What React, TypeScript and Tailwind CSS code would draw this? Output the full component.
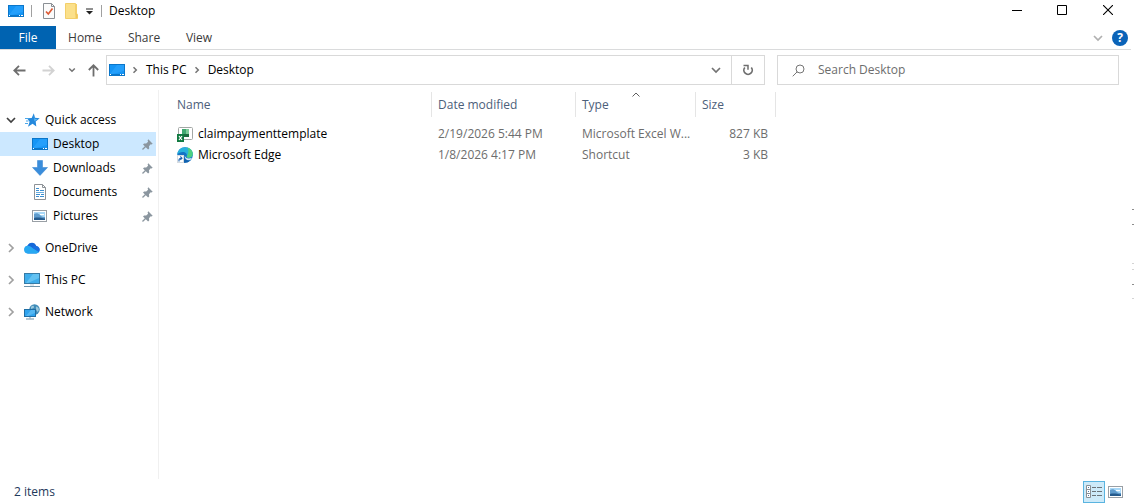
import type { ReactNode } from 'react'

const COLUMNS = [
  { label: 'Name', className: 'w-[273px] pl-[18px]' },
  { label: 'Date modified', className: 'w-[144px] pl-[6px]' },
  { label: 'Type', className: 'w-[120px] pl-[6px]', sorted: true },
  { label: 'Size', className: 'w-[80px] pl-[6px]' },
]

function DesktopIcon() {
  return (
    <svg width="16" height="16" viewBox="0 0 16 16" className="shrink-0" aria-hidden="true">
      <rect x="0" y="2" width="16" height="12" fill="#0b76c9" />
      <rect x="1" y="3" width="14" height="9" fill="#1595f5" />
      <path d="M8 3h7v6L4 12h-3z" fill="#2ea6ff" opacity=".6" />
      <path d="M1 12.5h1M11 12.5h1M13 12.5h2" stroke="#fff" />
    </svg>
  )
}

function CheckDocIcon() {
  return (
    <svg width="12" height="16" viewBox="0 0 12 16" aria-hidden="true">
      <path d="M.5.5h8l3 3v12H.5z" fill="#fbfbfb" stroke="#8a8f94" />
      <path d="M8.5.5v3h3" fill="none" stroke="#8a8f94" />
      <path d="M3 8.5l2.3 2.5L9.5 5.5" fill="none" stroke="#dc5a35" strokeWidth="1.7" />
    </svg>
  )
}

function FolderIcon() {
  return (
    <svg width="14" height="16" viewBox="0 0 14 16" aria-hidden="true">
      <path d="M.5.5h10v11h2v4H.5z" fill="#fbe08a" stroke="#f3cf6a" />
      <path d="M10.5 10.5h1.8V15h-1.8z" fill="#f0c75a" />
      <path d="M11.5 1v10" stroke="#f3cf6a" />
    </svg>
  )
}

function StarIcon() {
  return (
    <svg width="16" height="16" viewBox="0 0 16 16" className="shrink-0" aria-hidden="true">
      <path d="M9.8 1.2l1.2 4.6 4.7.4-4 3.2.6 5.1-3.7-2.8L4 14.7l1.6-5L3 6.300l4.700-.3z" fill="#2488dc" />
      <path d="M9.5 3l1 3.700 3 .5-3 2z" fill="#5db9f5" />
      <path d="M1 6.500h3.500M2 9h2.500M1 11.500h3" stroke="#4ba7ea" />
    </svg>
  )
}

function DownloadIcon() {
  return (
    <svg width="16" height="16" viewBox="0 0 16 16" className="shrink-0" aria-hidden="true">
      <path d="M5.5.5h5v7h5L8 15.5.5 7.500h5z" fill="#3a8ddb" stroke="#2e7fce" strokeWidth=".5" />
    </svg>
  )
}

function DocumentIcon() {
  return (
    <svg width="16" height="16" viewBox="0 0 16 16" className="shrink-0" aria-hidden="true">
      <path d="M2.5.5h8l3 3v12h-11z" fill="#fff" stroke="#8d9297" />
      <path d="M10.5.5v3h3" fill="none" stroke="#8d9297" />
      <path d="M4 4.500h3M4 6.500h3M8 6.500h4M4 10.500h4M9 10.500h3M4 12.500h3M8 12.500h4" stroke="#3d8fd0" />
      <path d="M4 8.500h8" stroke="#6baee0" />
    </svg>
  )
}

function PictureIcon() {
  return (
    <svg width="16" height="16" viewBox="0 0 16 16" className="shrink-0" aria-hidden="true">
      <rect x=".5" y="2.5" width="14" height="11" fill="#fff" stroke="#999fa5" />
      <rect x="2" y="4" width="11" height="8" fill="#a9d8f7" />
      <path d="M2 6c2-1 4-1 6 1s3 2 5 2v3H2z" fill="#5f9bcc" />
      <path d="M2 10c4-1 7 0 11 .5V12H2z" fill="#255a8c" />
      <path d="M8 6.500h4" stroke="#fff" />
    </svg>
  )
}

function CloudIcon() {
  return (
    <svg width="16" height="16" viewBox="0 0 16 16" className="shrink-0" aria-hidden="true">
      <path d="M4 13.500a4 4 0 01-.5-7.800A5 5 0 0112.300 6 3.800 3.800 0 0112.200 13.500z" fill="#1478e0" />
      <path d="M3.500 5.700A5 5 0 018 2.700c2 0 3.500 1.200 4.300 3.300L6 12z" fill="#1668d8" />
      <path d="M4 13.500a3.900 3.900 0 010-7.800c2 0 3 1.300 5 2.500l6 3.800a3.500 3.500 0 01-2.800 1.500z" fill="#27a8f2" />
      <path d="M12.300 6A3.800 3.800 0 0115 12L8 7.600C9.500 6.300 11 5.900 12.300 6z" fill="#1a6fe0" />
    </svg>
  )
}

function ComputerIcon() {
  return (
    <svg width="16" height="16" viewBox="0 0 16 16" className="shrink-0" aria-hidden="true">
      <rect x=".5" y="1.5" width="15" height="10" fill="#3fadeb" stroke="#367ba6" />
      <path d="M9 2h6v4L4 11H2z" fill="#7bd0f6" opacity=".6" />
      <path d="M6 12h4v2H6z" fill="#dbe5eb" />
      <path d="M0 14.500h16" stroke="#6f93a9" />
    </svg>
  )
}

function NetworkIcon() {
  return (
    <svg width="16" height="16" viewBox="0 0 16 16" className="shrink-0" aria-hidden="true">
      <circle cx="10.5" cy="5.5" r="5.2" fill="#3f8bb8" />
      <path d="M7 3c1.500-2 3-1 3 0S8.500 4.500 7 5zM12 2.500c1.500 0 2.300 1 2.700 2 .3 1.500 0 2.500-1 3.500C12.500 7 11.500 4.500 12 2.500z" fill="#9cc8dc" />
      <rect x=".5" y="5.5" width="11" height="7" fill="#2fa3ee" stroke="#1f6da3" />
      <path d="M7 6h4v3l-7 3H2z" fill="#6cc4f7" opacity=".6" />
      <path d="M5 13h2v1.500H5z" fill="#c0ced8" />
      <path d="M2 15h8" stroke="#6f93a9" />
    </svg>
  )
}

function ExcelIcon() {
  return (
    <svg width="16" height="16" viewBox="0 0 16 16" className="shrink-0" aria-hidden="true">
      <rect x="1.5" y="1.5" width="14" height="12" rx="1" fill="#fff" stroke="#a3a7a5" />
      <rect x="5" y="3" width="4" height="5" fill="#3fa870" />
      <rect x="9" y="3" width="3" height="5" fill="#7dcb98" />
      <rect x="5" y="8" width="7" height="3" fill="#1c6b3e" />
      <rect x="0" y="8" width="7" height="8" fill="#117a41" />
      <path d="M2 10l3 4M5 10l-3 4" stroke="#fff" strokeWidth="1.2" />
    </svg>
  )
}

function EdgeIcon() {
  return (
    <svg width="16" height="16" viewBox="0 0 16 16" className="shrink-0" aria-hidden="true">
      <circle cx="8" cy="8" r="7.8" fill="#1473c4" />
      <path d="M.3 7.500C.8 3 4 .2 8 .2c4.500 0 7.800 3.200 7.800 6.600 0 2.500-2 3.900-4 3.900-1.700 0-2.500-.7-2-1.500C10.500 7 8.500 5 5.800 5 3.500 5 1.300 6 .3 7.500z" fill="#27b1dc" />
      <path d="M10.500.6c3.300 1 5.300 3.500 5.300 6.200 0 2.500-2 3.900-4 3.900-1.700 0-2.500-.7-2-1.500C11.500 7 12 3.500 10.500.6z" fill="#4fcf80" />
      <path d="M7.800 8.500c.5 3 4 3.700 7.200 2.200-.4 1-1 1.800-1.700 2.400-3 .8-6-1.100-5.500-4.600z" fill="#fff" opacity=".85" />
      <path d="M7 9c0 3.500 3.500 5.300 6.300 4.200A7.800 7.800 0 017 15.700z" fill="#1161ae" />
      <rect x=".5" y="8.500" width="6" height="7" fill="#fff" stroke="#d5dbe0" />
      <path d="M2 14.500V13c0-1.200.8-1.800 3-1.800M3.300 9.500L5 11.200l-1.700 1.600" fill="none" stroke="#1c62b0" strokeWidth="1.1" />
    </svg>
  )
}

function PinIcon() {
  return (
    <svg width="11" height="11" viewBox="0 0 11 11" className="ml-auto shrink-0" aria-hidden="true">
      <path d="M6.300.3l4.400 4.400-1.200.8-.8-.2-1.700 1.900.2 2.200-1.100 1L1 5.500l1.100-1.100 2.100.1 1.900-1.800-.5-1.200z" fill="#8b969f" />
      <path d="M3.800 7.200L.5 10.500" stroke="#8b969f" strokeWidth="1.3" />
    </svg>
  )
}

function Chevron({ dir, color = '#a0a0a0' }: { dir: 'right' | 'down'; color?: string }) {
  return (
    <svg width="10" height="10" viewBox="0 0 10 10" className="shrink-0" aria-hidden="true">
      <path d={dir === 'right' ? 'M3 1l4 4-4 4' : 'M1 3l4 4 4-4'} fill="none" stroke={color} strokeWidth="1.7" />
    </svg>
  )
}

function SmallChevron({ dir }: { dir: 'right' | 'down' }) {
  return (
    <svg width="8" height="8" viewBox="0 0 8 8" className="shrink-0" aria-hidden="true">
      <path d={dir === 'right' ? 'M2.5 1.2L5.300 4 2.500 6.800' : 'M1.2 2.500L4 5.300l2.800-2.800'} fill="none" stroke="#737373" strokeWidth="1.5" />
    </svg>
  )
}

function Arrow({ className, color }: { className?: string; color: string }) {
  return (
    <svg width="13" height="13" viewBox="0 0 13 13" className={className} aria-hidden="true">
      <path d="M12.500 6.500H1.500M6 1.800L1.300 6.500 6 11.200" fill="none" stroke={color} strokeWidth="1.8" />
    </svg>
  )
}

const PINNED = [
  { label: 'Desktop', icon: <DesktopIcon />, active: true },
  { label: 'Downloads', icon: <DownloadIcon /> },
  { label: 'Documents', icon: <DocumentIcon /> },
  { label: 'Pictures', icon: <PictureIcon /> },
]

const ROOTS = [
  { label: 'OneDrive', icon: <CloudIcon /> },
  { label: 'This PC', icon: <ComputerIcon /> },
  { label: 'Network', icon: <NetworkIcon /> },
]

const FILES = [
  { name: 'claimpaymenttemplate', icon: <ExcelIcon />, modified: '2/19/2026 5:44 PM', type: 'Microsoft Excel W...', size: '827 KB' },
  { name: 'Microsoft Edge', icon: <EdgeIcon />, modified: '1/8/2026 4:17 PM', type: 'Shortcut', size: '3 KB' },
]

function TitleBar() {
  return (
    <header className="flex h-[26px] items-start">
      <div className="flex h-[22px] items-center pl-2">
        <DesktopIcon />
        <span className="ml-[7px] h-3 w-px bg-[#a0a0a0]" />
        <button aria-label="Properties" className="ml-[11px]"><CheckDocIcon /></button>
        <button aria-label="New folder" className="ml-[10px]"><FolderIcon /></button>
        <button aria-label="Customize Quick Access Toolbar" className="ml-[7px]">
          <svg width="7" height="7" viewBox="0 0 7 7" aria-hidden="true">
            <path d="M0 1h7" stroke="#222" />
            <path d="M0 3h7L3.500 6.500z" fill="#222" />
          </svg>
        </button>
        <span className="ml-2 h-3 w-px bg-[#a0a0a0]" />
        <h1 className="ml-[7px] text-black">Desktop</h1>
      </div>
      <div className="ml-auto flex h-5 items-center pr-[2px]">
        <button aria-label="Minimize" className="flex w-[46px] justify-center">
          <svg width="10" height="10" viewBox="0 0 10 10"><path d="M0 5.500h10" stroke="#000" /></svg>
        </button>
        <button aria-label="Maximize" className="flex w-11 justify-center">
          <svg width="10" height="10" viewBox="0 0 10 10"><path d="M.5.5h9v9h-9z" fill="none" stroke="#000" /></svg>
        </button>
        <button aria-label="Close" className="flex w-12 justify-center">
          <svg width="10" height="10" viewBox="0 0 10 10"><path d="M0 0l10 10M10 0L0 10" stroke="#000" strokeWidth="1.1" /></svg>
        </button>
      </div>
    </header>
  )
}

function Ribbon() {
  return (
    <nav className="mr-[3px] flex h-6 items-stretch border-b border-[#dadbdc] text-[#3b3b3b]">
      <button className="w-14 bg-[#0063b1] pt-px text-white">File</button>
      <button className="w-[58px] pt-px">Home</button>
      <button className="w-[60px] pt-px">Share</button>
      <button className="w-[50px] pt-px">View</button>
      <div className="ml-auto flex items-center gap-[9px] pr-[3px]">
        <button aria-label="Expand the ribbon"><Chevron dir="down" color="#b0b0b0" /></button>
        <button aria-label="Help" className="flex size-4 items-center justify-center rounded-full bg-[#0a63b8] font-bold text-white">?</button>
      </div>
    </nav>
  )
}

function AddressBar() {
  return (
    <div className="flex h-10 items-center pr-[15px]">
      <div className="flex w-[106px] items-center pl-[13px]">
        <button aria-label="Back"><Arrow color="#6e6e6e" /></button>
        <button aria-label="Forward" className="ml-4"><Arrow color="#d2d2d2" className="rotate-180" /></button>
        <button aria-label="Recent locations" className="ml-[13px]"><SmallChevron dir="down" /></button>
        <button aria-label="Up" className="ml-[11px]"><Arrow color="#6e6e6e" className="rotate-90" /></button>
      </div>
      <div className="flex h-[30px] flex-1 items-center border border-[#d9d9d9] pl-[2px]">
        <DesktopIcon />
        <span className="ml-[6px]"><SmallChevron dir="right" /></span>
        <button className="ml-[7px] text-black">This PC</button>
        <span className="ml-[6px]"><SmallChevron dir="right" /></span>
        <button className="ml-[7px] text-black">Desktop</button>
        <button aria-label="Previous locations" className="mr-[10px] ml-auto"><Chevron dir="down" color="#737373" /></button>
        <button aria-label="Refresh" className="flex h-full w-[33px] items-center justify-center border-l border-[#d9d9d9]">
          <svg width="12" height="12" viewBox="0 0 12 12" aria-hidden="true">
            <path d="M9.300 3.500A4.200 4.200 0 112.800 3.500" fill="none" stroke="#6e6e6e" strokeWidth="1.7" />
            <path d="M1.500 1.500H6v4.200" fill="none" stroke="#6e6e6e" strokeWidth="1.5" />
          </svg>
        </button>
      </div>
      <label className="ml-3 flex h-[30px] w-[342px] items-center border border-[#d9d9d9] pl-[14px]">
        <svg width="13" height="13" viewBox="0 0 13 13" className="shrink-0" aria-hidden="true">
          <circle cx="8" cy="5" r="4" fill="none" stroke="#757575" />
          <path d="M5.200 7.800L.7 12.300" stroke="#757575" />
        </svg>
        <input type="text" aria-label="Search Desktop" placeholder="Search Desktop" className="ml-[13px] min-w-0 flex-1 outline-none placeholder:text-[#6d6d6d]" />
      </label>
    </div>
  )
}

function TreeRow({ icon, label, open }: { icon: ReactNode; label: string; open?: boolean }) {
  return (
    <a href="#" className="flex h-6 items-center pl-[6px] text-black">
      <Chevron dir={open ? 'down' : 'right'} color={open ? '#404040' : '#a0a0a0'} />
      <span className="mr-[5px] ml-2">{icon}</span>
      {label}
    </a>
  )
}

function Sidebar() {
  return (
    <aside className="w-[159px] shrink-0 border-r border-[#f0f0f0] pt-[18px] pr-[2px]">
      <TreeRow icon={<StarIcon />} label="Quick access" open />
      {PINNED.map((item) => (
        <a key={item.label} href="#" className={`flex h-6 items-center gap-[5px] pr-[3px] pl-8 text-black ${item.active ? 'bg-[#cce8ff]' : ''}`}>
          {item.icon}
          {item.label}
          <PinIcon />
        </a>
      ))}
      <div className="mt-2 flex flex-col gap-2">
        {ROOTS.map((item) => <TreeRow key={item.label} icon={item.icon} label={item.label} />)}
      </div>
    </aside>
  )
}

function FileTable() {
  return (
    <table className="mt-[2px] w-[617px] table-fixed border-separate border-spacing-0 self-start text-left text-[#6d6d6d]">
      <thead>
        <tr className="h-[25px] text-[#4c607a]">
          {COLUMNS.map((col) => (
            <th key={col.label} scope="col" className={`relative border-r border-[#e5e5e5] font-normal ${col.className}`}>
              {col.label}
              {col.sorted && (
                <svg width="8" height="5" viewBox="0 0 8 5" className="absolute top-0 left-1/2 -translate-x-1/2" aria-hidden="true">
                  <path d="M.5 4.500L4 1l3.500 3.500" fill="none" stroke="#5f5f5f" />
                </svg>
              )}
            </th>
          ))}
        </tr>
      </thead>
      <tbody className="before:block before:h-[6px] before:content-['']">
        {FILES.map((file) => (
          <tr key={file.name} className="h-[21px]">
            <td className="pl-[18px] text-black">
              <div className="flex items-center gap-[5px]">{file.icon}{file.name}</div>
            </td>
            <td className="pl-[6px] whitespace-nowrap">{file.modified}</td>
            <td className="pl-[6px] whitespace-nowrap">{file.type}</td>
            <td className="pr-2 text-right">{file.size}</td>
          </tr>
        ))}
      </tbody>
    </table>
  )
}

function StatusBar() {
  return (
    <footer className="flex h-6 items-center pt-px pr-[10px] pl-[14px] text-[#1e395b]">
      <span>2 items</span>
      <div className="ml-auto flex items-center gap-[3px]">
        <button aria-label="Details view" className="flex size-[22px] items-center justify-center border border-[#5ab4e0] bg-[#cdeaf9]">
          <svg width="16" height="13" viewBox="0 0 16 13" aria-hidden="true">
            <path d="M.5.5h4v12h-4zM.5 4.500h4M.5 8.500h4" fill="#fff" stroke="#8a8f94" />
            <path d="M2 2.500h1M2 6.500h1M2 10.500h1" stroke="#4b7ba8" />
            <path d="M6 2.500h4M11 2.500h5M6 6.500h4M11 6.500h5M6 10.500h4M11 10.500h5" stroke="#6c7378" />
          </svg>
        </button>
        <button aria-label="Large icons view"><PictureIcon /></button>
      </div>
    </footer>
  )
}

export default function App() {
  return (
    <div className="relative flex min-h-screen flex-col bg-white font-['Open_Sans','Noto_Sans',sans-serif] text-[12px] leading-4">
      <TitleBar />
      <Ribbon />
      <AddressBar />
      <main className="flex flex-1">
        <Sidebar />
        <FileTable />
      </main>
      <StatusBar />
      {/* slivers of the window behind, showing past the right edge */}
      <svg width="2" height="90" viewBox="0 0 2 90" className="absolute top-[209px] right-0" aria-hidden="true">
        <path d="M0 .5h2M0 15.500h2M0 75.500h2" stroke="#8c8c8c" />
        <path d="M0 54.500h2M0 60.500h2M0 89.500h2" stroke="#d4d4d4" />
      </svg>
    </div>
  )
}
